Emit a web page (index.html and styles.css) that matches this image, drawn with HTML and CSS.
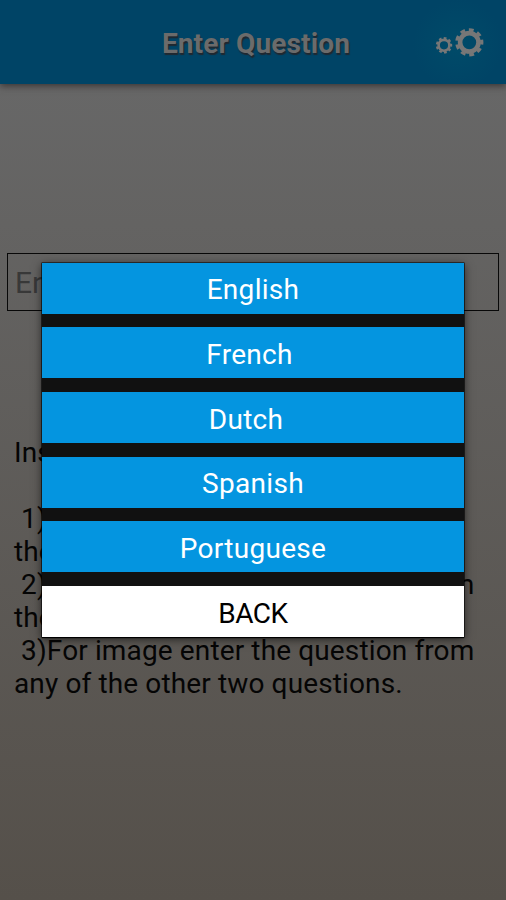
FILE: index.html
```html
<!DOCTYPE html>
<html lang="en">
<head>
<meta charset="utf-8">
<title>Enter Question</title>
<link rel="stylesheet" href="styles.css">
</head>
<body>
<main class="screen">
<header class="bar">
<h1>Enter Question</h1>
<svg class="gears" viewBox="0 0 54 36" aria-hidden="true">
<g fill="none" stroke="#777">
<circle cx="12" cy="19.3" r="5.4" stroke-width="2.6"/>
<circle cx="12" cy="19.3" r="7.1" stroke-width="2.2" pathLength="90" stroke-dasharray="5.5 4.5" stroke-dashoffset="3"/>
<circle cx="37.3" cy="16.3" r="9.2" stroke-width="4.6"/>
<circle cx="37.3" cy="16.3" r="12.5" stroke-width="3.2" pathLength="90" stroke-dasharray="5.5 4.5" stroke-dashoffset="3"/>
</g>
</svg>
</header>
<div class="field">Enter question</div>
<p class="instructions">Instructions:

 1)For text enter the question in
the text box.
 2)For sound enter the question from
the microphone.
 3)For image enter the question from
any of the other two questions.</p>
</main>
<div class="overlay">
<div class="menu">
<button class="english">English</button>
<button class="french">French</button>
<button class="dutch">Dutch</button>
<button class="spanish">Spanish</button>
<button class="portuguese">Portuguese</button>
<button class="back">BACK</button>
</div>
</div>
</body>
</html>
```
FILE: styles.css
```css
* { box-sizing: border-box; }
body { margin: 0; height: 900px; overflow: hidden; font-family: Roboto, sans-serif; }
.screen { height: 900px; background: linear-gradient(#676767 84px, #55504a); }
.bar {
  height: 84px;
  display: grid;
  grid-template-columns: 1fr auto 1fr;
  align-items: center;
  padding: 3px 20px 0 26px;
  background: radial-gradient(circle at 458px 44px, #004b69, #046 45px);
  box-shadow: 0 2px 7px #383434;
}
h1 {
  grid-column: 2;
  margin: 0;
  font-size: 28px;
  line-height: 34px;
  font-weight: 700;
  letter-spacing: 0.15px;
  color: #6b6b6b;
  text-shadow: 1px 2px 1px #202830;
}
.gears { width: 54px; height: 36px; justify-self: end; }
.field {
  height: 58px;
  margin: 169px 7px 0;
  padding: 0 7px;
  border: 1px solid #080808;
  font-size: 30px;
  line-height: 58px;
  color: #383838;
}
.instructions {
  margin: 125px 14px 0;
  font-size: 28px;
  line-height: 33px;
  letter-spacing: 0.13px;
  white-space: pre;
  color: #050505;
}
.overlay { position: absolute; inset: 0; padding: 263px 42px 0; }
.menu {
  height: 374px;
  display: grid;
  grid-template-rows: 64px 65px 65px 64px 65px 51px;
  align-items: start;
  background: #111;
  box-shadow: 0 0 0 .5px #000, 0 1px 1px #000, 0 2px 9px rgba(0, 0, 0, .65);
}
button {
  height: 51px;
  padding: 3px 0 0;
  border: 0;
  background: #0495e0;
  color: #fff;
  font: 28px/48px Roboto, sans-serif;
  letter-spacing: 0.3px;
}
.french { padding: 4px 7px 0 0; }
.dutch { padding: 4px 14px 0 0; }
.portuguese { padding-top: 4px; }
.back { padding-top: 4px; background: #fff; color: #000; letter-spacing: -0.5px; }
```
